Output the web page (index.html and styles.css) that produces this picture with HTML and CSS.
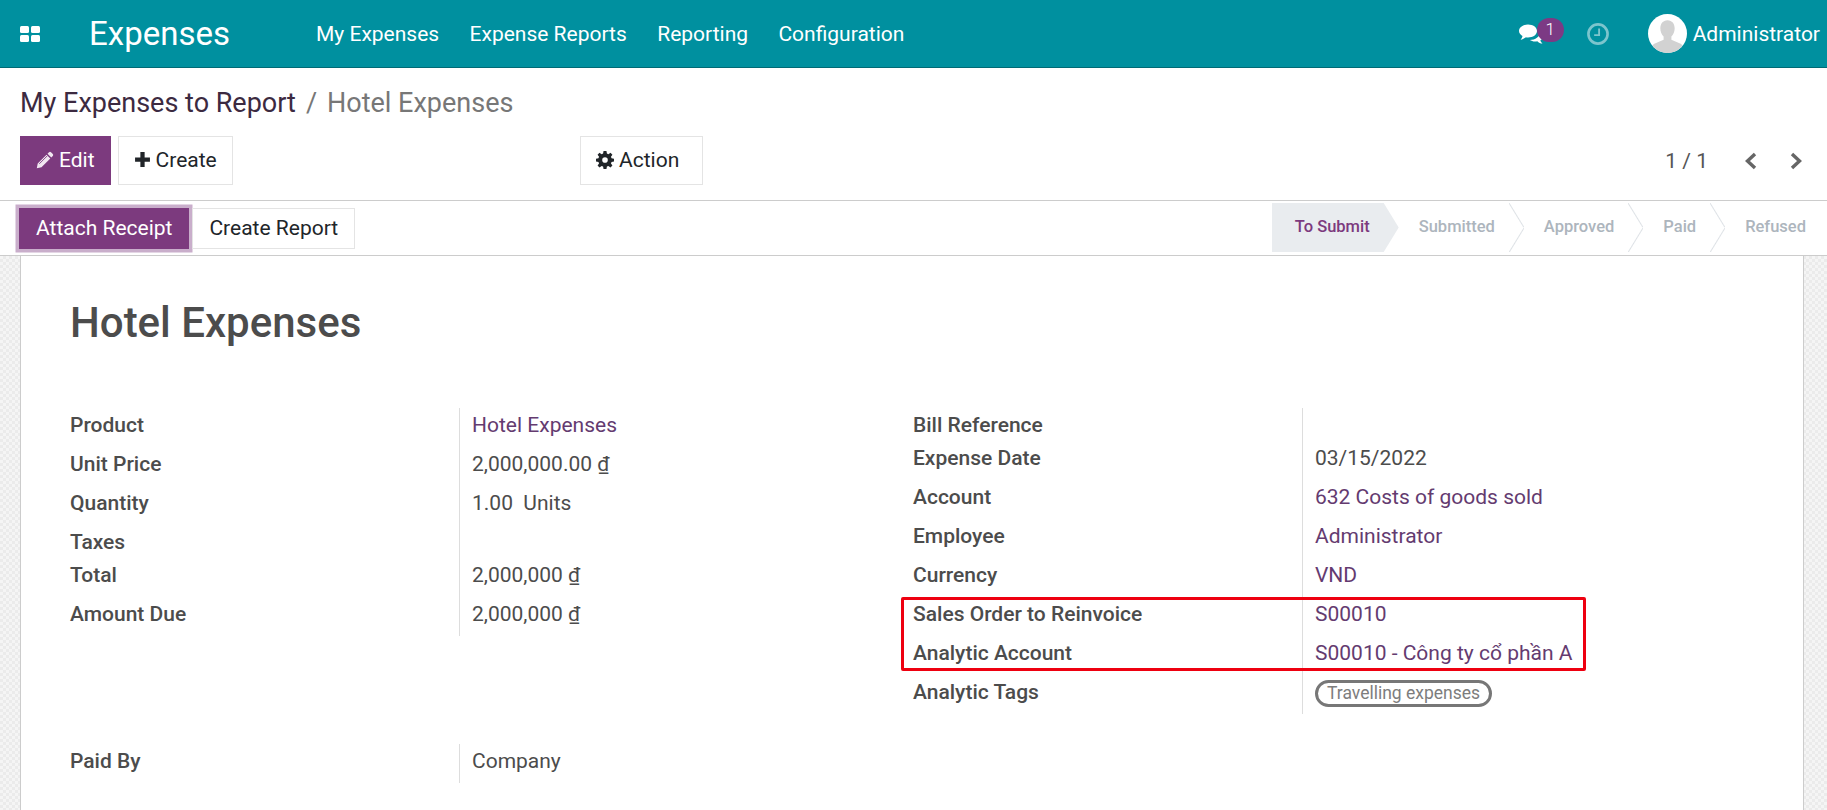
FILE: index.html
```html
<!DOCTYPE html>
<html lang="en">
<head>
    <meta charset="UTF-8">
    <meta name="viewport" content="width=device-width, initial-scale=1.0">
    <title>Hotel Expenses</title>
    <link rel="stylesheet" href="styles.css">
</head>
<body>
    <!-- Top navigation -->
    <header class="navbar">
        <svg class="apps-icon" viewBox="0 0 20 16" width="20" height="16">
            <rect x="0" y="0" width="9" height="7" rx="1.5"/>
            <rect x="11" y="0" width="9" height="7" rx="1.5"/>
            <rect x="0" y="9" width="9" height="7" rx="1.5"/>
            <rect x="11" y="9" width="9" height="7" rx="1.5"/>
        </svg>
        <span class="app-name">Expenses</span>
        <nav class="menu">
            <span>My Expenses</span>
            <span>Expense Reports</span>
            <span>Reporting</span>
            <span>Configuration</span>
        </nav>
        <div class="systray">
            <div class="messages">
                <svg viewBox="1 2 24 19" width="24" height="20">
                    <path d="M10 2c5 0 9 2.800 9 6.500S15 15 10 15c-.8 0-1.500 0-2.200-.2C6.500 16 4.500 17 2.500 17.300c1-1 1.800-2.300 2-3.700C2.400 12.300 1 10.500 1 8.500 1 4.800 5 2 10 2z" fill="#fff"/>
                    <path d="M21 8.500c2.500 1 4 2.800 4 5 0 1.700-1 3.300-2.600 4.300.2 1.200 1 2.400 2.100 3.200-2 0-3.800-.9-5.200-2.300-.7.200-1.500.3-2.300.3-2 0-3.800-.6-5.100-1.500 5.500 0 10-3.300 10-7.500 0-.5 0-1-.1-1.500z" fill="#fff"/>
                </svg>
                <span class="badge">1</span>
            </div>
            <svg class="clock" viewBox="0 0 20 20" width="22" height="22">
                <circle cx="10" cy="10" r="8.700" fill="none" stroke="#7cc5cd" stroke-width="2.400"/>
                <path d="M11 5v6H6.500" fill="none" stroke="#7cc5cd" stroke-width="1.700"/>
            </svg>
            <div class="user">
                <svg class="avatar" viewBox="0 0 38 38" width="39" height="39">
                    <clipPath id="round"><circle cx="19" cy="19" r="19"/></clipPath>
                    <g clip-path="url(#round)">
                        <rect width="38" height="38" fill="#fff"/>
                        <path d="M19 6c4.500 0 7 3.500 7 8 0 3.500-1.400 6.500-3.200 8v3l9 4c1.500.7 2.200 2 2.200 9H4c0-7 .7-8.300 2.200-9l9-4v-3c-1.800-1.500-3.200-4.500-3.200-8 0-4.500 2.500-8 7-8z" fill="#d2d2d2"/>
                    </g>
                </svg>
                <span>Administrator</span>
            </div>
        </div>
    </header>

    <!-- Breadcrumb and main buttons -->
    <section class="control-panel">
        <div class="breadcrumb">
            <span class="crumb-link">My Expenses to Report</span>
            <span class="crumb-sep">/</span>
            <span class="crumb-active">Hotel Expenses</span>
        </div>
        <div class="cp-buttons">
            <div class="cp-left">
                <button class="btn btn-primary">
                    <svg viewBox="0 0 18 18" width="18" height="18"><path d="M13 1.200a1.500 1.500 0 0 1 2 0l1.800 1.800a1.500 1.500 0 0 1 0 2l-1.500 1.500-3.800-3.800zM10.500 3.700l3.800 3.800L5.500 16.300.8 17.200l.9-4.700z" fill="#f1e6f1"/><path d="M3.300 12.800l8-8" stroke="#7c3a7e" stroke-width=".9"/></svg>
                    Edit
                </button>
                <button class="btn">
                    <svg viewBox="0 0 16 16" width="17" height="17"><path d="M6 1h4v5h5v4h-5v5H6v-5H1V6h5z" fill="#212529"/></svg>
                    Create
                </button>
            </div>
            <div class="cp-action">
                <button class="btn btn-action">
                    <svg viewBox="0 0 16 16" width="18" height="18"><path fill="#212529" fill-rule="evenodd" d="M6.700 0h2.600l.4 2.200 1.300.6L12.900 1.500l1.700 1.800-1.300 1.800.5 1.300 2.200.4v2.500l-2.200.4-.5 1.300 1.300 1.800-1.700 1.800-1.900-1.300-1.300.5-.4 2.200H6.700l-.4-2.200-1.300-.5-1.900 1.300-1.700-1.800 1.300-1.800-.5-1.300L0 9.300V6.800l2.200-.4.5-1.300L1.400 3.300l1.700-1.800L5 2.800l1.300-.6zM8 5.500a2.500 2.500 0 1 0 0 5 2.500 2.500 0 0 0 0-5z"/></svg>
                    Action
                </button>
            </div>
            <div class="pager">
                <span class="pager-count">1 / 1</span>
                <svg viewBox="0 0 14 18" width="14" height="18"><path d="M11 2L3.500 9l7.500 7" fill="none" stroke="#666" stroke-width="3.400"/></svg>
                <svg viewBox="0 0 14 18" width="14" height="18"><path d="M3 2l7.500 7L3 16" fill="none" stroke="#666" stroke-width="3.400"/></svg>
            </div>
        </div>
    </section>

    <!-- Statusbar -->
    <section class="statusbar">
        <div class="status-actions">
            <button class="btn btn-primary btn-focus">Attach Receipt</button>
            <button class="btn btn-flat">Create Report</button>
        </div>
        <div class="status-steps">
            <span class="step step-current">To Submit</span>
            <span class="step">Submitted</span>
            <span class="step">Approved</span>
            <span class="step">Paid</span>
            <span class="step step-refused">Refused</span>
        </div>
    </section>

    <!-- Form -->
    <main class="form-bg">
        <div class="sheet">
            <h1 class="title">Hotel Expenses</h1>
            <div class="groups">
                <div class="group">
                    <div class="row"><div class="label">Product</div><div class="value link">Hotel Expenses</div></div>
                    <div class="row"><div class="label">Unit Price</div><div class="value">2,000,000.00 <u>₫</u></div></div>
                    <div class="row"><div class="label">Quantity</div><div class="value">1.00&nbsp; Units</div></div>
                    <div class="row row-empty"><div class="label">Taxes</div><div class="value"></div></div>
                    <div class="row"><div class="label">Total</div><div class="value">2,000,000 <u>₫</u></div></div>
                    <div class="row"><div class="label">Amount Due</div><div class="value">2,000,000 <u>₫</u></div></div>
                </div>
                <div class="group">
                    <div class="row row-empty"><div class="label">Bill Reference</div><div class="value"></div></div>
                    <div class="row"><div class="label">Expense Date</div><div class="value">03/15/2022</div></div>
                    <div class="row"><div class="label">Account</div><div class="value link">632 Costs of goods sold</div></div>
                    <div class="row"><div class="label">Employee</div><div class="value link">Administrator</div></div>
                    <div class="row"><div class="label">Currency</div><div class="value link">VND</div></div>
                    <div class="highlight">
                        <div class="row"><div class="label">Sales Order to Reinvoice</div><div class="value link">S00010</div></div>
                        <div class="row"><div class="label">Analytic Account</div><div class="value link">S00010 - Công ty cổ phần A</div></div>
                        <div class="highlight-box"></div>
                    </div>
                    <div class="row"><div class="label">Analytic Tags</div><div class="value"><span class="tag">Travelling expenses</span></div></div>
                </div>
            </div>
            <div class="group group-paid">
                <div class="row"><div class="label">Paid By</div><div class="value">Company</div></div>
            </div>
        </div>
    </main>
</body>
</html>
```

FILE: styles.css
```css
* {
    box-sizing: border-box;
}
html, body {
    height: 100%;
}
body {
    margin: 0;
    display: flex;
    flex-direction: column;
    overflow: hidden;
    background-color: #fff;
    color: #4c4c4c;
    font-family: Roboto, "Noto Sans", sans-serif;
    font-size: 21px;
}

/* navbar */
.navbar {
    display: flex;
    align-items: center;
    flex: none;
    height: 68px;
    padding: 0 7px 0 20px;
    background-color: #00909f;
    border-bottom: 1px solid #006a75;
    color: #fff;
}
.apps-icon {
    fill: #fff;
    margin-right: 49px;
}
.app-name {
    font-size: 33px;
    width: 227px;
}
.menu {
    display: flex;
    gap: 30.400px;
    flex: 1;
}
.systray {
    display: flex;
    align-items: center;
}
.messages {
    position: relative;
    display: flex;
    margin-right: 44px;
}
.badge {
    position: absolute;
    top: -6px;
    left: 18px;
    width: 27px;
    height: 24px;
    border-radius: 12px;
    background-color: #7c3a84;
    color: #fff;
    font-size: 17px;
    font-weight: 300;
    line-height: 23px;
    text-align: center;
}
.clock {
    margin-right: 39px;
}
.user {
    display: flex;
    align-items: center;
    gap: 6px;
}

/* control panel */
.control-panel {
    flex: none;
    height: 133px;
    padding: 17px 20px 0;
    border-bottom: 1px solid #ccc;
}
.breadcrumb {
    font-size: 27px;
    line-height: 37px;
    display: flex;
    gap: 10px;
}
.crumb-link {
    color: #3c2a41;
}
.crumb-sep, .crumb-active {
    color: #777;
}
.cp-buttons {
    display: flex;
    align-items: center;
    margin-top: 14px;
}
.cp-left {
    display: flex;
    gap: 7px;
    width: 560px;
}
.cp-action {
    flex: 1;
}
.btn {
    display: inline-flex;
    align-items: center;
    justify-content: center;
    gap: 5px;
    height: 49px;
    padding: 0 15px 2px;
    background-color: #fff;
    border: 1px solid #e4e4e4;
    color: #212529;
    font-family: inherit;
    font-size: 21px;
}
.btn-primary {
    background-color: #7c3a7e;
    border-color: #7c3a7e;
    color: #fff;
}
.btn-action {
    padding-right: 23px;
}
.pager {
    display: flex;
    align-items: center;
    padding-right: 4px;
    color: #555;
}
.pager-count {
    margin-right: 36px;
}
.pager svg + svg {
    margin-left: 31px;
}

/* statusbar */
.statusbar {
    flex: none;
    display: flex;
    justify-content: space-between;
    height: 55px;
    border-bottom: 1px solid #ccc;
}
.status-actions {
    display: flex;
    align-items: center;
    gap: 3px;
    padding: 0 0 0 19px;
}
.status-actions .btn {
    height: 41px;
    padding: 0 16px;
}
.btn-focus {
    box-shadow: 0 0 0 3.500px #c9aecb;
}
.status-steps {
    display: flex;
    height: 49px;
    margin-top: 2px;
    color: #adb5bd;
    font-size: 16.500px;
    font-weight: 500;
}
.step {
    display: flex;
    align-items: center;
    position: relative;
    padding: 0 29px 2px 20px;
}
.step::after {
    content: "";
    position: absolute;
    right: 0;
    top: 0;
    width: 15px;
    height: 100%;
    background:
        linear-gradient(to top right, transparent calc(50% - 1px), #dee2e6 50%, transparent calc(50% + 1px)) top / 100% 50% no-repeat,
        linear-gradient(to bottom right, transparent calc(50% - 1px), #dee2e6 50%, transparent calc(50% + 1px)) bottom / 100% 50% no-repeat;
}
.step-current {
    background-color: #e9ecef;
    color: #7c3a7e;
    padding-left: 23px;
    clip-path: polygon(0 0, calc(100% - 15px) 0, 100% 50%, calc(100% - 15px) 100%, 0 100%);
}
.step-current::after {
    display: none;
}
.step-refused {
    padding-right: 21px;
}
.step-refused::after {
    display: none;
}

/* form */
.form-bg {
    flex: 1;
    padding: 0 23px 0 20px;
    background-color: #f0f0f0;
    background-image: repeating-conic-gradient(#ebebeb 0 25%, #f5f5f5 0 50%);
    background-size: 6px 6px;
}
.sheet {
    height: 100%;
    padding: 38px 49px 0;
    background-color: #fff;
    border-left: 1px solid #ccc;
    border-right: 1px solid #ccc;
}
.title {
    margin: 0;
    font-size: 42px;
    font-weight: 500;
    line-height: 57px;
}
.groups {
    display: flex;
    margin-top: 57px;
}
.group {
    flex: none;
    width: 843px;
}
.row {
    display: grid;
    grid-template-columns: 389px 1fr;
    min-height: 39px;
}
.row-empty {
    min-height: 32.500px;
}
.label {
    padding-top: 1px;
    color: #4c4c4c;
    font-weight: 500;
    line-height: 32px;
}
.value {
    padding: 1px 0 6px 12px;
    border-left: 1px solid #ddd;
    line-height: 32px;
}
.link {
    color: #643b70;
}
.highlight {
    position: relative;
}
.highlight-box {
    position: absolute;
    top: 0;
    left: -12px;
    width: 685px;
    height: 74px;
    border: 3px solid #ee0010;
    border-radius: 2px;
    pointer-events: none;
}
.tag {
    display: inline-block;
    padding: 0 9px;
    border: 3px solid #777;
    border-radius: 14px;
    color: #7d7d7d;
    font-size: 17.500px;
    line-height: 21px;
}
.group-paid {
    margin-top: 30px;
}
```
